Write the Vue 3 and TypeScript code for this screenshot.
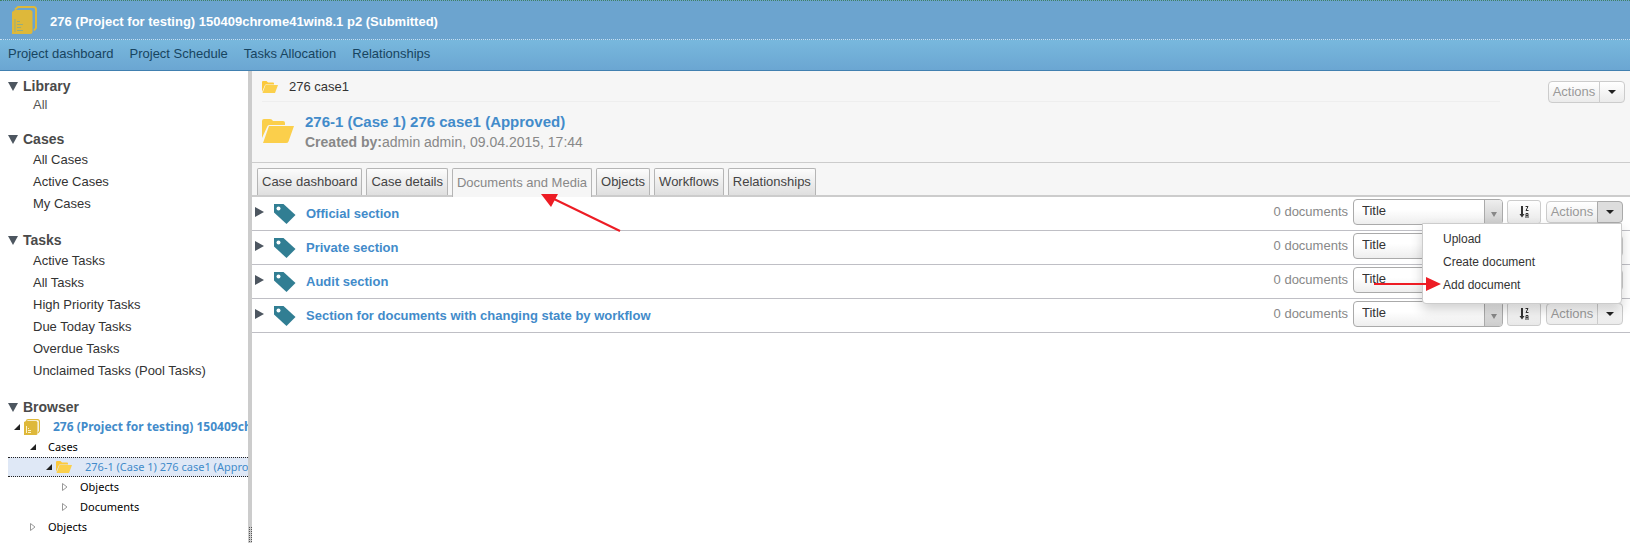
<script setup lang="ts">
import { ref } from 'vue'

interface NavGroup {
  title: string
  items: string[]
  quiet?: boolean
}

const projectLinks: string[] = ['Project dashboard', 'Project Schedule', 'Tasks Allocation', 'Relationships']

const groups: NavGroup[] = [
  { title: 'Library', items: ['All'], quiet: true },
  { title: 'Cases', items: ['All Cases', 'Active Cases', 'My Cases'] },
  {
    title: 'Tasks',
    items: ['Active Tasks', 'All Tasks', 'High Priority Tasks', 'Due Today Tasks', 'Overdue Tasks', 'Unclaimed Tasks (Pool Tasks)'],
  },
]

const tabs: string[] = ['Case dashboard', 'Case details', 'Documents and Media', 'Objects', 'Workflows', 'Relationships']
const activeTab = ref('Documents and Media')

const sections: string[] = ['Official section', 'Private section', 'Audit section', 'Section for documents with changing state by workflow']
const openMenu = ref(0)
const menuItems: string[] = ['Upload', 'Create document', 'Add document']

function toggleMenu(index: number): void {
  openMenu.value = openMenu.value === index ? -1 : index
}
</script>

<template>
  <div class="page">
    <header class="title-bar">
      <svg class="book-large" viewBox="0 0 25 28" aria-hidden="true">
        <path d="M3 3.500L6 1H21.500Q24 1 24 3.500V22L22 24.500" fill="none" stroke="#deb83a" stroke-width="2" />
        <path d="M0 6L3 4H18Q20.500 4 20.500 6.500V25.500Q20.500 28 18 28H0Z" fill="#deb83a" />
        <path d="M3 13V26M5 15.500H8M5 18.500H11M5 21.500H9M5 24.500H11" stroke="#93ad83" stroke-width="1" />
      </svg>
      <h1>276 (Project for testing) 150409chrome41win8.1 p2 (Submitted)</h1>
    </header>
    <nav class="project-nav">
      <a v-for="link in projectLinks" :key="link" href="#">{{ link }}</a>
    </nav>

    <div class="body">
      <aside class="sidebar">
        <section v-for="group in groups" :key="group.title" class="group">
          <h2><span class="down"></span>{{ group.title }}</h2>
          <ul :class="{ quiet: group.quiet }">
            <li v-for="item in group.items" :key="item"><a href="#">{{ item }}</a></li>
          </ul>
        </section>
        <section class="group">
          <h2><span class="down"></span>Browser</h2>
          <div class="tree">
            <a href="#" class="node root">
              <svg class="open" viewBox="0 0 6 6"><path d="M6 0V6H0Z" /></svg>
              <svg class="book" viewBox="0 0 16 16" aria-hidden="true">
                <path d="M2 1.500L4 .6H13.500Q15.400 .6 15.400 2.500V12L14 14" fill="none" stroke="#deb83a" stroke-width="1.200" />
                <path d="M0 3L2 2H12Q13.500 2 13.500 3.500V14.500Q13.500 16 12 16H0Z" fill="#deb83a" />
                <path d="M2.500 7V14M4 9.500H5M4 11.500H7M4 13.500H7" stroke="#fff3c8" />
              </svg>
              <span>276 (Project for testing) 150409chrome41win8.1 p2</span>
            </a>
            <a href="#" class="node level-one"><svg class="open" viewBox="0 0 6 6"><path d="M6 0V6H0Z" /></svg><span>Cases</span></a>
            <a href="#" class="node level-two selected">
              <svg class="open" viewBox="0 0 6 6"><path d="M6 0V6H0Z" /></svg>
              <svg class="folder" viewBox="0 0 32 24" aria-hidden="true">
                <path d="M0 22V2Q0 0 2 0H9L12 3H22Q24 3 24 5V7H8Q6 7 5.500 9Z" fill="#fcc93c" />
                <path d="M7 8H32L26 24H1Z" fill="#fbd04c" />
              </svg>
              <span>276-1 (Case 1) 276 case1 (Approved)</span>
            </a>
            <a href="#" class="node level-three"><svg class="closed" viewBox="0 0 6 8"><path d="M.5 .5L5 4L.5 7.500Z" /></svg><span>Objects</span></a>
            <a href="#" class="node level-three"><svg class="closed" viewBox="0 0 6 8"><path d="M.5 .5L5 4L.5 7.500Z" /></svg><span>Documents</span></a>
            <a href="#" class="node level-one"><svg class="closed" viewBox="0 0 6 8"><path d="M.5 .5L5 4L.5 7.500Z" /></svg><span>Objects</span></a>
          </div>
        </section>
      </aside>
      <div class="splitter"><span class="grip"></span></div>

      <main class="main">
        <div class="case-head">
          <div class="head-info">
            <div class="crumb">
              <svg class="folder" viewBox="0 0 32 24" aria-hidden="true">
                <path d="M0 22V2Q0 0 2 0H9L12 3H22Q24 3 24 5V7H8Q6 7 5.500 9Z" fill="#fcc93c" />
                <path d="M7 8H32L26 24H1Z" fill="#fbd04c" />
              </svg>
              <span>276 case1</span>
            </div>
            <div class="case">
              <svg class="folder-large" viewBox="0 0 32 24" aria-hidden="true">
                <path d="M0 19V2Q0 0 2 0H8Q10 0 11 2H21Q23 2 23 4V6H8Q6 6 5.500 7Z" fill="#fbcf4b" />
                <path d="M7 7H32L26.500 22.500Q26 24 24 24H1Z" fill="#fbcf4b" />
              </svg>
              <div>
                <h2><a href="#">276-1 (Case 1) 276 case1 (Approved)</a></h2>
                <p><b>Created by:</b>admin admin, 09.04.2015, 17:44</p>
              </div>
            </div>
          </div>
          <div class="split-button head-actions">
            <button type="button" class="actions">Actions</button>
            <button type="button" class="caret" aria-label="Open case actions"></button>
          </div>
        </div>

        <div class="tabs" role="tablist">
          <button
            v-for="tab in tabs"
            :key="tab"
            type="button"
            role="tab"
            :aria-selected="tab === activeTab"
            :class="{ active: tab === activeTab }"
            @click="activeTab = tab"
          >
            {{ tab }}
            <svg v-if="tab === 'Documents and Media'" class="tab-pointer" viewBox="0 0 80 38" aria-hidden="true">
              <path d="M13 5L79 37" stroke="#ed1c24" stroke-width="2" />
              <path d="M0 0L17 0L10 13Z" fill="#ed1c24" />
            </svg>
          </button>
        </div>

        <div v-for="(section, index) in sections" :key="section" class="section-row">
          <span class="right"></span>
          <svg class="tag" viewBox="0 0 22 20" aria-hidden="true">
            <path d="M0 0H9.500L21.500 11L12.500 20L0 8.500Z" fill="#317e93" />
            <circle cx="4.500" cy="4.500" r="2" fill="#fff" />
          </svg>
          <a href="#" class="section-link">{{ section }}</a>
          <span class="count">0 documents</span>
          <label class="sort">
            <select :aria-label="'Sort ' + section + ' by'"><option>Title</option></select>
            <span class="drop"></span>
          </label>
          <button type="button" class="order" aria-label="Toggle sort order">
            <svg viewBox="0 0 10 12" aria-hidden="true">
              <path d="M2 0H4V8H5.500L3 11.500L.5 8H2Z" fill="#333" />
              <path d="M6.500 .5H9L7 4.500H9.500M7 12V7.500H9V12M7 9.500H9" fill="none" stroke="#333" />
            </svg>
          </button>
          <div class="split-button">
            <button type="button" class="actions">Actions</button>
            <button type="button" class="caret" :class="{ pressed: openMenu === index }" :aria-label="'Open actions for ' + section" @click="toggleMenu(index)"></button>
            <div v-if="openMenu === index" class="menu">
              <a v-for="item in menuItems" :key="item" href="#">{{ item }}</a>
              <svg class="menu-pointer" viewBox="0 0 68 14" aria-hidden="true">
                <path d="M0 7H54" stroke="#ed1c24" stroke-width="2" />
                <path d="M52 0L67 7L52 14Z" fill="#ed1c24" />
              </svg>
            </div>
          </div>
        </div>
      </main>
    </div>
  </div>
</template>

<style>
body {
  margin: 0;
}
</style>

<style scoped>
* {
  box-sizing: border-box;
}
.page {
  display: flex;
  flex-direction: column;
  min-height: 100vh;
  font: 13px/22px "Liberation Sans", Arial, sans-serif;
  color: #333;
  background: #fff;
}
a {
  color: inherit;
  text-decoration: none;
}
h1, h2, p, ul {
  margin: 0;
  padding: 0;
}
button {
  font: inherit;
}
.title-bar {
  display: flex;
  align-items: center;
  gap: 13px;
  height: 40px;
  padding: 0 12px;
  background: #6ca4cf;
  border-top: 1px dotted #3f8061;
  border-bottom: 1px dotted #c5e0f2;
}
.title-bar h1 {
  font-size: 13px;
  color: #fff;
  padding-top: 4px;
}
.book-large {
  width: 25px;
  height: 28px;
}
.project-nav {
  display: flex;
  gap: 16px;
  height: 31px;
  padding: 2px 8px 0;
  line-height: 24px;
  color: #174460;
  background: linear-gradient(#78b8dd, #6ba6d2);
  border-bottom: 1px solid #4180b0;
}
.body {
  display: flex;
  flex: 1;
}
.sidebar {
  flex: 0 0 248px;
  min-width: 0;
  overflow: hidden;
  padding: 6px 0 0 8px;
}
.group {
  margin-bottom: 16px;
}
.group h2 {
  display: flex;
  align-items: center;
  gap: 5px;
  font-size: 14px;
  line-height: 18px;
  color: #4a4a4a;
}
.down {
  border: 5px solid transparent;
  border-top: 9px solid #4d5660;
  border-bottom: 0;
}
.group ul {
  list-style: none;
  padding: 1px 0 0 25px;
}
.group .quiet {
  line-height: 18px;
  color: #555;
}
.tree {
  padding-top: 1px;
  font: 11px/20px "Noto Sans", sans-serif;
  color: #000;
}
.node {
  display: flex;
  align-items: center;
  height: 20px;
  white-space: nowrap;
}
.node svg {
  flex: none;
}
.open {
  width: 6px;
  height: 6px;
  fill: #222;
}
.closed {
  width: 6px;
  height: 8px;
  fill: #fff;
  stroke: #999;
}
.root {
  padding-left: 6px;
  font-size: 12px;
  font-weight: bold;
  color: #428bca;
}
.book {
  width: 16px;
  height: 16px;
  margin: 0 13px 0 4px;
}
.level-one {
  padding-left: 22px;
  gap: 12px;
}
.level-two {
  padding-left: 38px;
}
.level-two .folder {
  margin: 0 13px 0 4px;
}
.level-three {
  padding-left: 54px;
  gap: 12px;
}
.selected {
  color: #428bca;
  background: #dfe8f6;
  border-top: 1px dotted #222;
  border-bottom: 1px dotted #222;
}
.folder {
  width: 16px;
  height: 12px;
}
.splitter {
  flex: 0 0 4px;
  display: flex;
  flex-direction: column;
  justify-content: flex-end;
  padding: 0 0 11px 1px;
  background: #ccc;
}
.grip {
  height: 15px;
  border-left: 1px dotted #555;
  border-right: 1px dotted #555;
}
.main {
  flex: 1;
  min-width: 0;
}
.case-head {
  display: flex;
  align-items: flex-start;
  height: 91px;
  padding: 0 5px 0 10px;
  background: #f6f6f6;
}
.head-info {
  flex: 1;
  margin-right: 48px;
}
.crumb {
  display: flex;
  align-items: center;
  gap: 11px;
  height: 31px;
  padding-top: 2px;
  border-bottom: 1px solid #eee;
}
.case {
  display: flex;
  align-items: flex-start;
  gap: 11px;
  padding-top: 10px;
}
.folder-large {
  width: 32px;
  height: 24px;
  margin-top: 7px;
}
.case h2 {
  font-size: 15px;
  line-height: 20px;
  color: #428bca;
}
.case p {
  font-size: 14px;
  line-height: 20px;
  color: #888;
}
.split-button {
  display: flex;
  position: relative;
}
.head-actions {
  margin-top: 10px;
}
.split-button button {
  height: 22px;
  padding: 0;
  color: #999;
  background: linear-gradient(#fff, #ebebeb);
  border: 1px solid #ccc;
}
.split-button .actions {
  width: 52px;
  border-radius: 4px 0 0 4px;
  line-height: 20px;
}
.split-button .caret {
  display: flex;
  align-items: center;
  justify-content: center;
  width: 26px;
  margin-left: -1px;
  border-radius: 0 4px 4px 0;
}
.caret::before {
  content: "";
  border: 4px solid transparent;
  border-top-color: #222;
  border-bottom: 0;
}
.split-button .pressed {
  background: #ddd;
  border-color: #aaa;
}
.tabs {
  display: flex;
  gap: 4px;
  height: 35px;
  padding: 5px 5px 0;
  background: #f6f6f6;
  border-top: 1px solid #ccc;
  border-bottom: 2px solid #ccc;
}
.tabs button {
  position: relative;
  padding: 0 4px;
  color: #444;
  white-space: nowrap;
  background: linear-gradient(#fcfcfc, #dfdfdf);
  border: 1px solid #b5b5b5;
  border-bottom: 0;
  border-radius: 2px 2px 0 0;
}
.tabs .active {
  height: 29px;
  color: #888;
  background: #f6f6f6;
}
.tab-pointer {
  position: absolute;
  left: 88px;
  top: 25px;
  width: 80px;
  height: 38px;
  z-index: 1;
}
.section-row {
  display: flex;
  align-items: center;
  height: 34px;
  padding: 0 7px 4px 3px;
  border-bottom: 1px solid #bfbfc5;
}
.right {
  border: 5px solid transparent;
  border-left: 9px solid #4d5660;
  border-right: 0;
}
.tag {
  width: 22px;
  height: 20px;
  margin: 4px 10px 0;
}
.section-link {
  flex: 1;
  padding-top: 4px;
  font-weight: bold;
  color: #428bca;
}
.count {
  margin-right: 5px;
  color: #888;
}
.sort {
  display: flex;
  position: relative;
  margin-right: 4px;
}
.sort select {
  width: 150px;
  height: 26px;
  padding: 0 8px 3px;
  font: inherit;
  color: #333;
  appearance: none;
  background: linear-gradient(#fff 40%, #eee);
  border: 1px solid #aaa;
  border-radius: 4px;
}
.drop {
  position: absolute;
  top: 1px;
  right: 1px;
  bottom: 1px;
  width: 18px;
  display: flex;
  align-items: center;
  justify-content: center;
  background: linear-gradient(#eee, #ccc);
  border-left: 1px solid #aaa;
  border-radius: 0 3px 3px 0;
  pointer-events: none;
}
.drop::before {
  content: "";
  margin-top: 5px;
  border: 3px solid transparent;
  border-top: 5px solid #888;
  border-bottom: 0;
}
.order {
  display: flex;
  align-items: center;
  justify-content: center;
  width: 34px;
  height: 24px;
  margin-right: 5px;
  padding: 0;
  background: linear-gradient(#fff, #e8e8e8);
  border: 1px solid #ccc;
  border-radius: 3px;
}
.order svg {
  width: 10px;
  height: 12px;
}
.menu {
  position: absolute;
  top: 100%;
  right: 1px;
  z-index: 2;
  width: 200px;
  padding: 4px 0 6px;
  font-size: 12px;
  color: #333;
  background: #fff;
  border: 1px solid #ccc;
  border-radius: 0 0 4px 4px;
  box-shadow: 0 6px 12px rgba(0, 0, 0, 0.18);
}
.menu a {
  display: block;
  padding-left: 20px;
  line-height: 23px;
}
.menu-pointer {
  position: absolute;
  right: 179px;
  bottom: 12px;
  width: 68px;
  height: 14px;
}
</style>
